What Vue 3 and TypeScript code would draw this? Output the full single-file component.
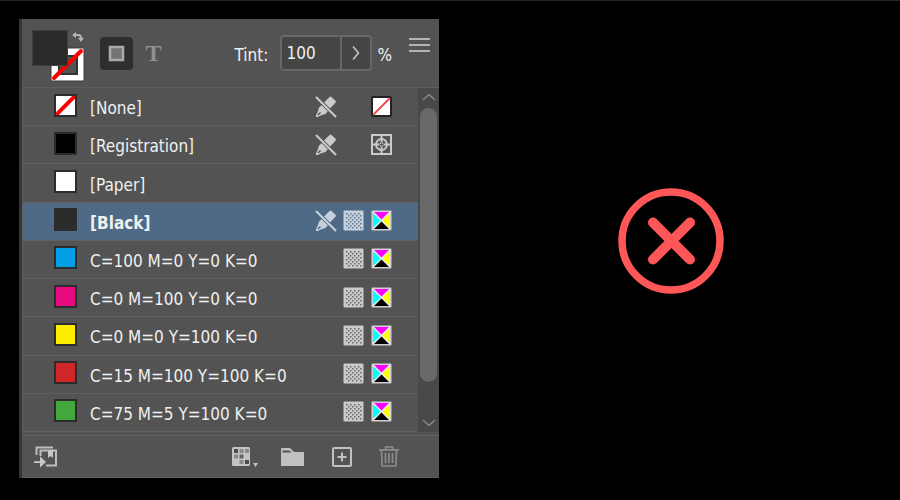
<script setup lang="ts">
import { ref } from 'vue'

interface Swatch {
  name: string
  color: string
  locked?: boolean
  global?: boolean
  mode?: 'none' | 'registration' | 'cmyk'
}

const swatches: Swatch[] = [
  { name: '[None]', color: '#ffffff', locked: true, mode: 'none' },
  { name: '[Registration]', color: '#000000', locked: true, mode: 'registration' },
  { name: '[Paper]', color: '#ffffff' },
  { name: '[Black]', color: '#2b2b2a', locked: true, global: true, mode: 'cmyk' },
  { name: 'C=100 M=0 Y=0 K=0', color: '#009fe6', global: true, mode: 'cmyk' },
  { name: 'C=0 M=100 Y=0 K=0', color: '#e80a7f', global: true, mode: 'cmyk' },
  { name: 'C=0 M=0 Y=100 K=0', color: '#ffed00', global: true, mode: 'cmyk' },
  { name: 'C=15 M=100 Y=100 K=0', color: '#cf2628', global: true, mode: 'cmyk' },
  { name: 'C=75 M=5 Y=100 K=0', color: '#42a83c', global: true, mode: 'cmyk' },
]

const selected = ref('[Black]')
const tint = ref('100')

const dots: { x: number; y: number }[] = []
for (let row = 0; row < 8; row++) {
  for (let col = 0; col < 4; col++) {
    dots.push({ x: 3 + col * 4 + (row % 2) * 2, y: 3 + row * 2 })
  }
}
</script>

<template>
  <main class="page">
    <section class="panel" aria-label="Swatches">
      <header class="header">
        <button class="proxy" type="button" aria-label="Fill and stroke">
          <svg width="54" height="54" viewBox="0 0 54 54">
            <path d="M19 18h33v33H19z" fill="#fff" stroke="#3c3c3c" />
            <path d="M27 26h18v18H27z" fill="#535353" stroke="#333" stroke-width="2" />
            <path d="M22 48L49 21" stroke="#fb0000" stroke-width="4" stroke-linecap="round" />
            <path d="M.5 .5h35v35h-35z" fill="#2b2b29" stroke="#3f3f3f" />
            <path d="M43 5h3q3 0 3 3v2" fill="none" stroke="#b4b4b4" stroke-width="2" />
            <path d="M44 2v6l-4-3zM46 8h6l-3 4z" fill="#b4b4b4" />
          </svg>
        </button>
        <button class="target active" type="button" aria-label="Formatting affects container">
          <svg width="17" height="17" viewBox="0 0 17 17">
            <rect x="2" y="2" width="13" height="13" fill="#747474" stroke="#aaa" stroke-width="2.500" />
          </svg>
        </button>
        <button class="target text-target" type="button">T</button>
        <div class="tint">
          <label for="tint">Tint:</label>
          <div class="stepper">
            <input id="tint" v-model="tint" type="text" />
            <button type="button" aria-label="Tint slider">
              <svg width="10" height="16" viewBox="0 0 10 16">
                <path d="M2 1.500L7.500 8 2 14.500" fill="none" stroke="#c4c4c4" stroke-width="1.600" />
              </svg>
            </button>
          </div>
          <span class="unit">%</span>
        </div>
        <button class="menu" type="button" aria-label="Panel menu">
          <svg width="21" height="14" viewBox="0 0 21 14">
            <path d="M0 1h21M0 7h21M0 13h21" stroke="#b4b4b4" stroke-width="2" />
          </svg>
        </button>
      </header>

      <div class="body">
        <ul class="list" role="listbox" aria-label="Colors">
          <li
            v-for="s in swatches"
            :key="s.name"
            class="row"
            :class="{ selected: s.name === selected }"
            role="option"
            :aria-selected="s.name === selected"
            @click="selected = s.name"
          >
            <span class="chip" :style="{ backgroundColor: s.color }">
              <svg v-if="s.mode === 'none'" width="19" height="19" viewBox="0 0 19 19">
                <path d="M0 19L19 0" stroke="#fb0000" stroke-width="4" />
              </svg>
            </span>
            <span class="name">{{ s.name }}</span>
            <span class="slot">
              <svg v-if="s.locked" class="mark" width="22" height="22" viewBox="0 0 22 22">
                <path d="M16.500 1l4 3.800q1 1 0 2L15 12.500l-6-6L14.500 1q1-1 2 0z" fill="currentColor" />
                <path d="M7.500 8.500l6 6-3 3.500-5 1.500L3 21H1v-2l1.500-2.500 1.500-5z" fill="currentColor" />
                <path d="M3 19l2.500-2.500" stroke="var(--row)" stroke-width="1.500" />
                <path d="M1 1l20 20" stroke="var(--row)" stroke-width="3.500" />
                <path d="M1 1l20 20" stroke="currentColor" stroke-width="2.200" />
              </svg>
            </span>
            <span class="slot">
              <svg v-if="s.global" class="mark" width="21" height="21" viewBox="0 0 21 21">
                <rect x=".5" y=".5" width="20" height="20" rx="1" fill="currentColor" />
                <rect v-for="(d, i) in dots" :key="i" class="dot" :x="d.x" :y="d.y" width="1.500" height="1.500" />
              </svg>
            </span>
            <span class="slot">
              <svg v-if="s.mode === 'none'" width="21" height="21" viewBox="0 0 21 21">
                <rect x="1" y="1" width="19" height="19" rx="1" fill="#fff" stroke="#222" stroke-width="2" />
                <path d="M2 19L19 2" stroke="#ee4548" stroke-width="1.800" />
              </svg>
              <svg v-else-if="s.mode === 'registration'" class="mark" width="21" height="21" viewBox="0 0 21 21">
                <g fill="none" stroke="currentColor" stroke-width="2">
                  <rect x="1" y="1" width="19" height="19" />
                  <circle cx="10.500" cy="10.500" r="5.500" />
                  <path d="M10.500 1v7M10.500 13v7M1 10.500h7M13 10.500h7" />
                </g>
                <circle cx="10.500" cy="10.500" r="2.200" fill="currentColor" />
                <path d="M10.500 8.500v4M8.500 10.500h4" stroke="#535353" />
              </svg>
              <svg v-else-if="s.mode === 'cmyk'" width="21" height="21" viewBox="0 0 21 21">
                <rect x=".5" y=".5" width="20" height="20" rx="1" fill="#d0d0d0" />
                <rect x="2" y="2" width="17" height="17" fill="#eee" />
                <path d="M3 2h15l-7.500 7.500z" fill="#f0f" />
                <path d="M2 3v15l7.500-7.500z" fill="#0ff" />
                <path d="M19 3v15l-7.500-7.500z" fill="#ff0" />
                <path d="M3 19h15l-7.500-7.500z" fill="#000" />
              </svg>
            </span>
          </li>
        </ul>
        <div class="scroll" aria-hidden="true">
          <svg width="14" height="8" viewBox="0 0 14 8">
            <path d="M1 7l6-5.500L13 7" fill="none" stroke="#888" stroke-width="1.500" />
          </svg>
          <div class="track"><div class="thumb"></div></div>
          <svg width="14" height="8" viewBox="0 0 14 8">
            <path d="M1 1l6 5.500L13 1" fill="none" stroke="#888" stroke-width="1.500" />
          </svg>
        </div>
      </div>

      <footer class="footer">
        <button class="library" type="button" aria-label="Add to library">
          <svg width="24" height="22" viewBox="0 0 24 22">
            <path d="M2.500 9V1.500H19M6.500 10V4.500H22V19.500H12" fill="none" stroke="#bebebe" stroke-width="2" />
            <path d="M14 4h5v8l-2.500-2-2.500 2z" fill="#c8c8c8" />
            <path d="M0 15.200h6v-5l6 5.800-6 5.500v-4.500H0z" fill="#c8c8c8" />
          </svg>
        </button>
        <button type="button" aria-label="Swatch views">
          <svg width="26" height="22" viewBox="0 0 26 22">
            <rect x="0" y="1" width="18" height="19" rx="1.500" fill="#c4c4c4" />
            <g fill="#4b4b4b">
              <rect x="2" y="3" width="4" height="4" />
              <rect x="13" y="14" width="4" height="4" />
            </g>
            <g fill="#8b8b8b">
              <rect x="7.500" y="3" width="4" height="4" />
              <rect x="13" y="3" width="4" height="4" />
              <rect x="2" y="8.500" width="4" height="4" />
              <rect x="7.500" y="14" width="4" height="4" />
            </g>
            <rect x="7.500" y="8.500" width="4" height="4" fill="#666" />
            <path d="M21 17h5l-2.500 4z" fill="#c4c4c4" />
          </svg>
        </button>
        <button type="button" aria-label="New color group">
          <svg width="24" height="20" viewBox="0 0 24 20">
            <path d="M0 2q0-1 1-1h8l4 4h9q1 0 1 1v13H0z" fill="#c1c1c1" />
            <path d="M1.500 3.500h7l2 2h-9z" fill="#555" />
          </svg>
        </button>
        <button type="button" aria-label="New swatch">
          <svg width="20" height="20" viewBox="0 0 20 20">
            <rect x="1" y="1" width="18" height="18" rx="1" fill="none" stroke="#c1c1c1" stroke-width="2" />
            <path d="M10 5.500v9M5.500 10h9" stroke="#c1c1c1" stroke-width="2" />
          </svg>
        </button>
        <button type="button" aria-label="Delete swatch" disabled>
          <svg width="20" height="21" viewBox="0 0 20 21">
            <g fill="none" stroke="#8c8c8c" stroke-width="1.700">
              <path d="M0 3.800h20M6.500 3.500V1h7v2.500M2.500 4l.5 15q0 1 1 1h12q1 0 1-1l.5-15M6.500 7v10M10 7v10M13.500 7v10" />
            </g>
          </svg>
        </button>
      </footer>
    </section>

    <div class="verdict">
      <svg width="106" height="106" viewBox="0 0 106 106" role="img" aria-label="Incorrect">
        <circle cx="53" cy="53" r="49" fill="none" stroke="#ff5757" stroke-width="7.500" />
        <path d="M35 34.500l37 37M72 34.500l-37 37" stroke="#ff5757" stroke-width="10" stroke-linecap="round" />
      </svg>
    </div>
  </main>
</template>

<style>
body {
  background: #000;
}
</style>

<style scoped>
.page {
  box-sizing: border-box;
  min-height: 100vh;
  display: grid;
  grid-template-columns: 420fr 461fr;
  padding: 18px 0 22px 19px;
  border-top: 1px solid #262626;
  background: #000;
  color: #f0f0f0;
  font: 17px/20px "DejaVu Sans Condensed", "Noto Sans", sans-serif;
}
button {
  display: flex;
  align-items: center;
  justify-content: center;
  padding: 0;
  border: 0;
  background: none;
  color: inherit;
  font: inherit;
}
svg {
  display: block;
}
.panel {
  box-sizing: border-box;
  display: flex;
  flex-direction: column;
  border-left: 3px solid #363636;
  background: #535353;
}
.header {
  box-sizing: border-box;
  display: flex;
  align-items: center;
  height: 68px;
  padding: 0 9px 0 10px;
}
.proxy {
  margin: 8px 14px 0 0;
}
.target {
  width: 33px;
  height: 33px;
  border-radius: 4px;
}
.active {
  background: #2e2e2e;
}
.text-target {
  margin-left: 4px;
  color: #909090;
  font: bold 24px/33px "Liberation Serif", serif;
}
.tint {
  display: flex;
  align-items: center;
  margin-left: auto;
}
.tint label,
.unit {
  padding-top: 4px;
}
.stepper {
  display: flex;
  margin: 0 5px 0 12px;
  border: 2px solid #686868;
  border-radius: 4px;
  background: #454545;
}
.stepper input {
  box-sizing: border-box;
  width: 58px;
  height: 32px;
  padding: 0 4px;
  border: 0;
  background: none;
  color: inherit;
  font: inherit;
}
.stepper button {
  width: 30px;
  border-left: 2px solid #686868;
}
.menu {
  align-self: flex-start;
  margin: 19px 0 0 17px;
}
.body {
  flex: 1;
  display: flex;
  border-top: 1px solid #5e5e5e;
  border-left: 1px solid #5e5e5e;
}
.list {
  flex: 1;
  display: grid;
  grid-auto-rows: 1fr;
  margin: 0;
  padding: 0;
  list-style: none;
}
.row {
  --row: #535353;
  display: flex;
  align-items: center;
  padding: 0 25px 0 31px;
  border-bottom: 1px solid #606060;
  background: var(--row);
}
.selected {
  --row: #4f6a86;
  font-weight: bold;
}
.chip {
  width: 19px;
  height: 19px;
  margin-bottom: 3px;
  border: 2px solid #2c2c2c;
}
.name {
  flex: 1;
  margin-left: 13px;
  padding-top: 3px;
}
.slot {
  width: 22px;
  height: 22px;
  margin-left: 6px;
}
.mark {
  color: #cacaca;
}
.dot {
  fill: #686868;
}
.selected .mark {
  color: #c5d0dc;
}
.selected .dot {
  fill: #61788f;
}
.scroll {
  box-sizing: border-box;
  width: 21px;
  display: flex;
  flex-direction: column;
  align-items: center;
  padding: 5px 2px;
  background: #494949;
}
.track {
  flex: 1;
  width: 17px;
  margin: 7px 0;
}
.thumb {
  height: 90%;
  border-radius: 9px;
  background: #696969;
}
.footer {
  box-sizing: border-box;
  display: flex;
  align-items: center;
  gap: 23px;
  height: 46px;
  padding: 4px 40px 0 12px;
  border-bottom: 1px solid #5e5e5e;
  background: linear-gradient(#606060, #606060) 0 3px / 100% 1px no-repeat;
}
.footer button:nth-last-child(-n + 2) {
  margin-left: 4px;
}
.footer .library {
  margin-right: auto;
}
.verdict {
  display: grid;
  place-items: center;
  padding: 0 0 16px 2px;
}
</style>
